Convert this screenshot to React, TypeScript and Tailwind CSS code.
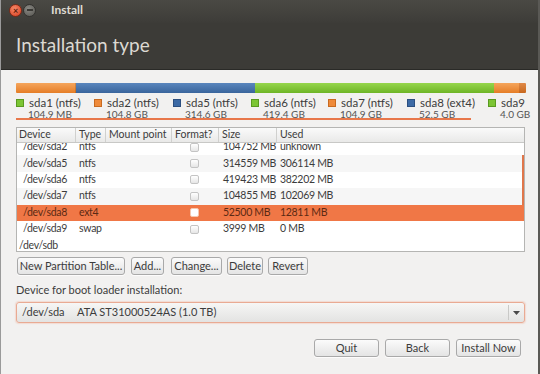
const font = "font-['Lato','Noto_Sans',sans-serif]";

type Row = { dev: string; type?: string; size?: string; used?: string; part: boolean; bg: string; sel?: boolean; edge?: boolean };

const rows: Row[] = [
  { dev: '/dev/sda2', type: 'ntfs', size: '104752 MB', used: 'unknown', part: true, bg: 'bg-white' },
  { dev: '/dev/sda5', type: 'ntfs', size: '314559 MB', used: '306114 MB', part: true, bg: 'bg-[#f6f6f6]', edge: true },
  { dev: '/dev/sda6', type: 'ntfs', size: '419423 MB', used: '382202 MB', part: true, bg: 'bg-white', edge: true },
  { dev: '/dev/sda7', type: 'ntfs', size: '104855 MB', used: '102069 MB', part: true, bg: 'bg-[#f6f6f6]', edge: true },
  { dev: '/dev/sda8', type: 'ext4', size: '52500 MB', used: '12811 MB', part: true, bg: 'bg-[#f07746]', sel: true },
  { dev: '/dev/sda9', type: 'swap', size: '3999 MB', used: '0 MB', part: true, bg: 'bg-white' },
  { dev: '/dev/sdb', part: false, bg: 'bg-white' },
];

const legend = [
  { name: 'sda1 (ntfs)', size: '104.9 MB', sq: 'bg-[#7cc534] border-[#5a9a20]', w: 'w-[78px]' },
  { name: 'sda2 (ntfs)', size: '104.8 GB', sq: 'bg-[#ef8a3a] border-[#c86a20]', w: 'w-[79px]' },
  { name: 'sda5 (ntfs)', size: '314.6 GB', sq: 'bg-[#3d6aa5] border-[#2c4f80]', w: 'w-[78px]' },
  { name: 'sda6 (ntfs)', size: '419.4 GB', sq: 'bg-[#7cc534] border-[#5a9a20]', w: 'w-[77px]' },
  { name: 'sda7 (ntfs)', size: '104.9 GB', sq: 'bg-[#ef8a3a] border-[#c86a20]', w: 'w-[79px]' },
  { name: 'sda8 (ext4)', size: '52.5 GB', sq: 'bg-[#3d6aa5] border-[#2c4f80]', w: 'w-[81px]' },
  { name: 'sda9', size: '4.0 GB', sq: 'bg-[#7cc534] border-[#5a9a20]', w: 'w-[46px]' },
];

const Btn = ({ label, className }: { label: string; className: string }) => (
  <div className={`h-[18px] flex items-center justify-center whitespace-nowrap rounded-[3px] border border-[#a9a9a9] bg-[linear-gradient(to_bottom,#fbfbfb,#e4e4e4)] text-[11px] text-[#3c3c3c] shadow-[0_1px_0_rgba(255,255,255,0.8)] ${className}`}>
    {label}
  </div>
);

const Check = ({ sel }: { sel?: boolean }) => (
  <div className={`w-[9px] h-[9px] rounded-[2px] border ${sel ? 'border-[#f6c8b0] bg-white' : 'border-[#c4c4c4] bg-[linear-gradient(to_bottom,#ffffff,#e6e6e6)]'}`} />
);

export default function App() {
  return (
    <div className={`w-[540px] h-[374px] overflow-hidden bg-[#f2f1f0] border-l border-[#9a9a9a] border-r-2 border-r-[#5a5955] ${font}`}>
      {/* header */}
      <div className="h-[70px] bg-[#3c3b37] border-b border-[#2a2a27] bg-[linear-gradient(to_bottom,#4a4944_0px,#403f3b_18px,#3c3b37_24px)]">
        <div className="h-[20px] flex items-center pl-[8px]">
          <div className="w-[13px] h-[13px] rounded-full bg-[radial-gradient(circle_at_40%_35%,#f48a6a,#d83a1c)] border border-[#7a2a18] flex items-center justify-center text-[9px] leading-none text-[#5a1a0a] font-bold">×</div>
          <div className="ml-[1px] w-[13px] h-[13px] rounded-full bg-[radial-gradient(circle_at_40%_35%,#8a8984,#55544f)] border border-[#33322f] flex items-center justify-center">
            <div className="w-[6px] h-[2px] bg-[#3a3935]" />
          </div>
          <span className="ml-[15px] text-[12px] font-bold text-[#dfdbd2]">Install</span>
        </div>
        <div className="pl-[15px] pt-[14px] text-[19px] leading-[22px] text-[#dcd9d2]">Installation type</div>
      </div>

      <div className="pl-[15px] pr-[16px]">
        {/* partition bar */}
        <div className="mt-[13px] h-[10px] flex w-[510px] rounded-[1px] overflow-hidden">
          <div className="w-[60px] bg-[linear-gradient(to_bottom,#f5a55c,#e57d26)] shadow-[inset_-1px_0_0_rgba(0,0,0,0.15)]" />
          <div className="w-[179px] bg-[linear-gradient(to_bottom,#5a86bd,#3a659c)]" />
          <div className="w-[239px] bg-[linear-gradient(to_bottom,#96d64c,#6eb526)]" />
          <div className="w-[25px] bg-[linear-gradient(to_bottom,#f5a55c,#e57d26)]" />
          <div className="w-[7px] bg-[linear-gradient(to_bottom,#e08a48,#c8681e)]" />
        </div>

        {/* legend */}
        <div className="mt-[4px] flex w-[518px] whitespace-nowrap">
          {legend.map((l) => (
            <div key={l.name} className={`${l.w} shrink-0`}>
              <div className="h-[12px] flex items-center">
                <div className={`w-[8px] h-[8px] border ${l.sq}`} />
                <span className="ml-[5px] text-[11.5px] leading-none text-[#3c3c3c]">{l.name}</span>
              </div>
              <div className="h-[10px] pl-[12px] text-[10px] leading-[10px] text-[#555]">{l.size}</div>
            </div>
          ))}
        </div>
        <div className="-mt-[1px] h-[2px] w-[455px] bg-[#e8774a]" />

        {/* table */}
        <div className="mt-[7px] w-[509px] border border-[#b5b5b3] bg-white text-[10.5px] text-[#3c3c3c] whitespace-nowrap">
          <div className="h-[15px] grid grid-cols-[59px_30px_66px_47px_58px_1fr] bg-[linear-gradient(to_bottom,#fafafa,#e9e9e8)] border-b border-[#c8c8c6]">
            {['Device', 'Type', 'Mount point', 'Format?', 'Size', 'Used'].map((h, i) => (
              <div key={h} className={`flex items-center overflow-hidden ${i === 0 ? 'pl-[2px]' : 'pl-[3px]'} ${i < 5 ? 'border-r border-[#d0d0ce]' : ''}`}>{h}</div>
            ))}
          </div>
          <div className="h-[108px] overflow-hidden tracking-[-0.3px]">
            <div className="-mt-[4px]">
              {rows.map((r) => (
                <div key={r.dev} className={`h-[16.4px] grid grid-cols-[59px_30px_66px_47px_58px_1fr] items-center ${r.bg} ${r.sel ? 'text-[#5b2a14]' : ''} ${r.edge ? 'shadow-[inset_-2px_0_0_#e0764a]' : ''}`}>
                  <div className={r.part ? 'pl-[6px]' : 'pl-[2px]'}>{r.dev}</div>
                  <div className="pl-[3px]">{r.type}</div>
                  <div />
                  <div className="pl-[18px]">{r.part && <Check sel={r.sel} />}</div>
                  <div className="pl-[4px]">{r.size}</div>
                  <div className="pl-[3px]">{r.used}</div>
                </div>
              ))}
            </div>
          </div>
        </div>

        {/* action buttons */}
        <div className="mt-[5px] flex">
          <Btn label="New Partition Table..." className="ml-[1px] w-[108px]" />
          <Btn label="Add..." className="ml-[6px] w-[33px]" />
          <Btn label="Change..." className="ml-[7px] w-[51px]" />
          <Btn label="Delete" className="ml-[5px] w-[36px]" />
          <Btn label="Revert" className="ml-[5px] w-[40px]" />
        </div>

        <div className="mt-[9px] h-[13px] flex items-center text-[11px] text-[#3c3c3c]">Device for boot loader installation:</div>

        {/* combo */}
        <div className="mt-[5px] h-[21px] w-[509px] flex items-center rounded-[3px] border border-[#e9aa93] shadow-[0_0_1px_1px_rgba(240,150,120,0.25)] bg-[linear-gradient(to_bottom,#f6f6f5,#e3e3e2)] text-[11px] text-[#3c3c3c]">
          <span className="pl-[5px] w-[60px]">/dev/sda</span>
          <span>ATA ST31000524AS (1.0 TB)</span>
          <div className="ml-auto h-[15px] border-l border-[#c9c9c7] w-[16px] flex items-center justify-center">
            <svg width="7" height="4" viewBox="0 0 7 4"><path d="M0 0h7L3.5 4z" fill="#4a4a4a" /></svg>
          </div>
        </div>

        {/* bottom buttons */}
        <div className="mt-[16px] flex justify-end pr-[1px]">
          <Btn label="Quit" className="w-[65px]" />
          <Btn label="Back" className="ml-[6px] w-[65px]" />
          <Btn label="Install Now" className="ml-[6px] w-[65px]" />
        </div>
      </div>
    </div>
  );
}
